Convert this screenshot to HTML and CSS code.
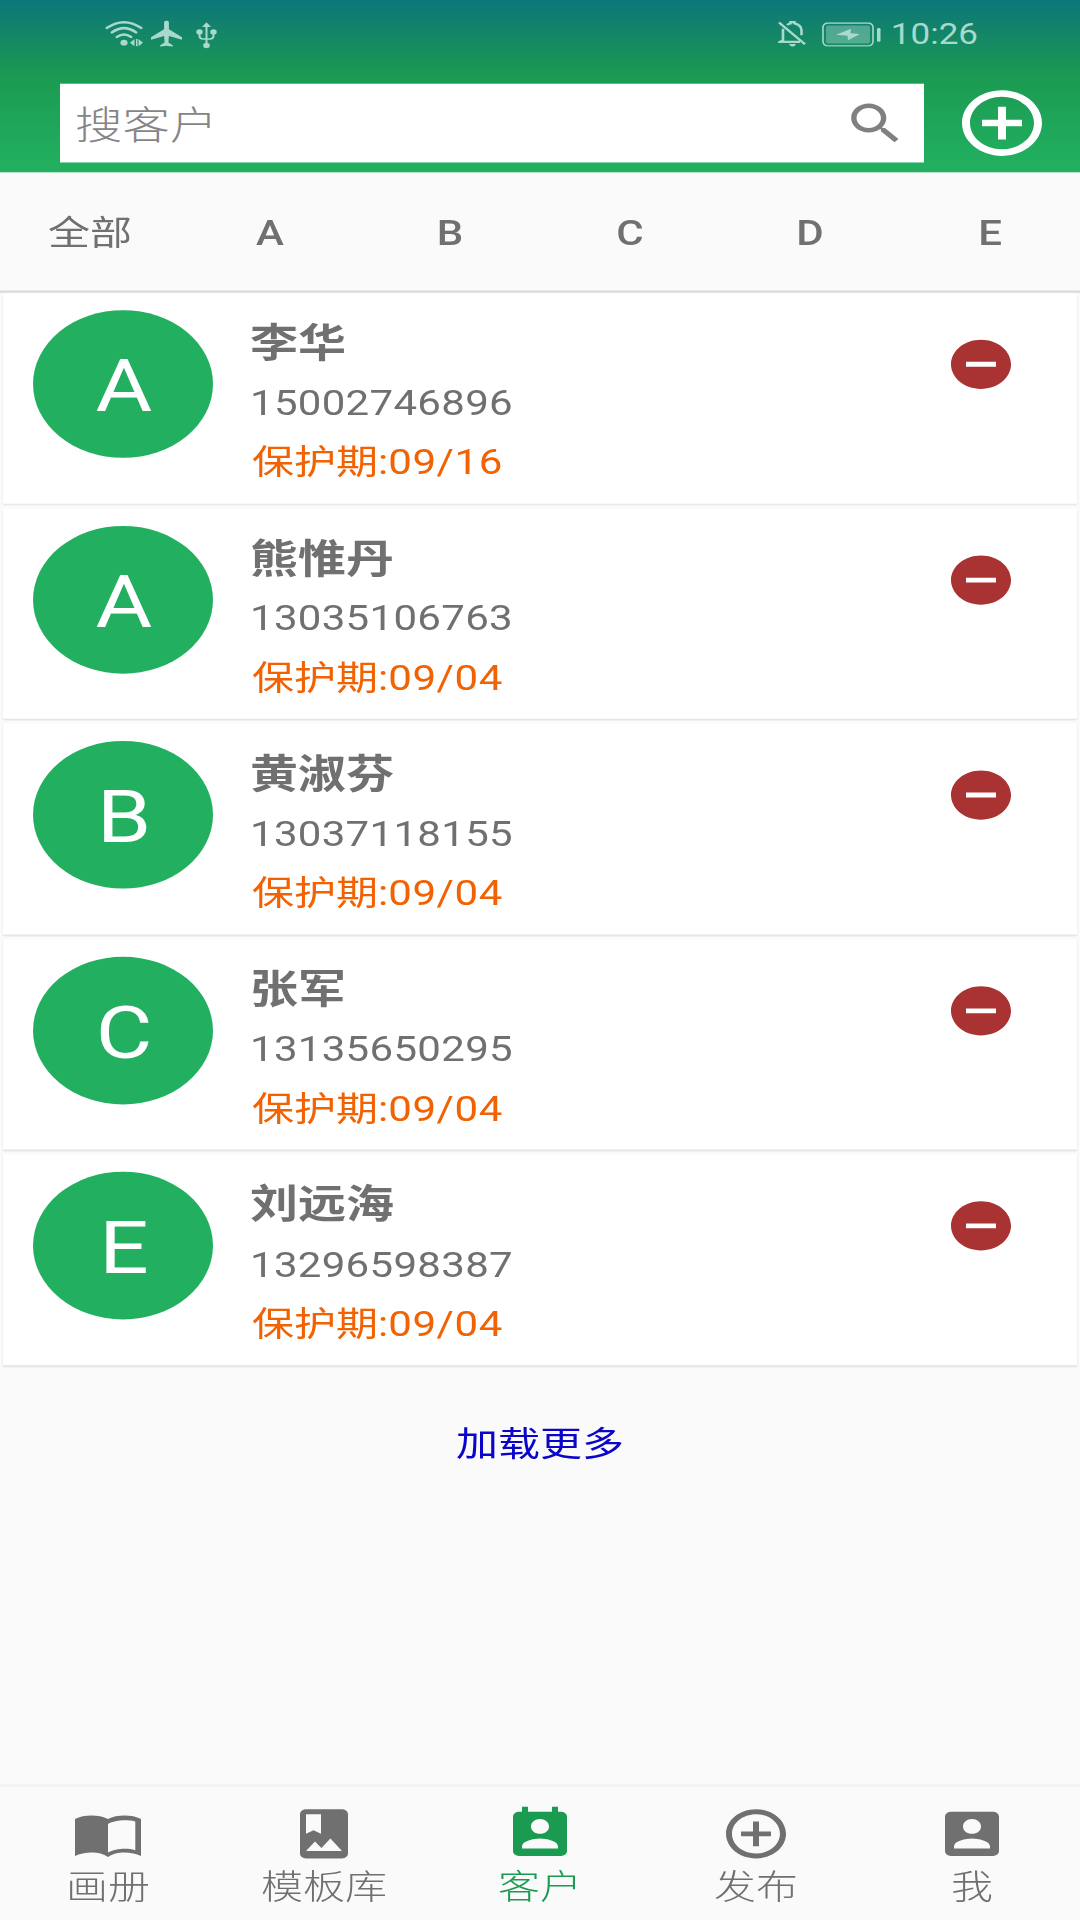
FILE: index.html
```
<!DOCTYPE html>
<html lang="zh-CN">
<head>
  <meta charset="UTF-8">
  <title>客户</title>
  <meta name="viewport" content="width=device-width, initial-scale=1.0">
  <link rel="stylesheet" href="styles.css">
</head>
<body>
  <!-- shared icons -->
  <svg class="defs">
    <symbol id="minus" viewBox="0 0 24 24"><path d="M12 2C6.48 2 2 6.48 2 12s4.48 10 10 10 10-4.48 10-10S17.52 2 12 2zm5 11H7v-2h10v2z"/></symbol>
    <symbol id="plus" viewBox="0 0 24 24"><path d="M13 7h-2v4H7v2h4v4h2v-4h4v-2h-4V7zm-1-5C6.48 2 2 6.48 2 12s4.48 10 10 10 10-4.48 10-10S17.52 2 12 2zm0 18c-4.410 0-8-3.590-8-8s3.590-8 8-8 8 3.590 8 8-3.590 8-8 8z"/></symbol>
  </svg>

  <div class="app">
    <header>
      <div class="status">
        <svg class="wifi" viewBox="0 0 38 32">
          <g fill="none" stroke="currentColor" stroke-width="3" stroke-linecap="round">
            <path d="M2 9Q19-5 36 9"/><path d="M7 14.5Q19 4 31 14.5"/><path d="M12 20Q19 14 26 20"/>
          </g>
          <circle cx="19" cy="27" r="3.600"/><path d="M25 27l4.500-4.500v9zM31 22.500h1.500v9H31zM33.500 22.500l4.500 4.500-4.500 4.500z"/>
        </svg>
        <svg class="plane" viewBox="0 0 31 32"><path d="M15.500 0c1.700 0 2.400 1.500 2.400 3v7.500L31 20.500v2.800l-13.100-4.400-.5 8 4.400 3.100v2l-6.300-1.200L9.200 32v-2l4.400-3.100-.5-8L0 23.300v-2.800l13.100-10V3c0-1.500.7-3 2.400-3z"/></svg>
        <svg class="usb" viewBox="0 0 21 32">
          <path fill="none" stroke="currentColor" stroke-width="2" d="M10.500 4v24M3.500 12v5q0 3.500 3.500 3.500h7q3.500 0 3.500-3.500v-5"/>
          <path d="M10.500 0l4.500 6H6z"/><circle cx="3.500" cy="12" r="3.200"/><circle cx="17.500" cy="12" r="3.200"/><circle cx="10.500" cy="28.500" r="3.300"/>
        </svg>
        <svg class="bell" viewBox="0 0 28 32">
          <path fill="none" stroke="currentColor" stroke-width="2.600" d="M1 2.500l26 26.500M5 10v14l-3 2h20M9 5.500Q11.500 3.500 12.500 3.500V2h4v1.500Q23.500 5.500 23.500 12v6"/>
          <path d="M11 28.500h7q-1 3.500-3.500 3.500T11 28.500z"/>
        </svg>
        <svg class="battery" viewBox="0 0 59 30">
          <rect x="1" y="1" width="50" height="28" rx="5" fill="none" stroke="currentColor" stroke-width="1.600"/>
          <rect x="4" y="4" width="44" height="22" rx="2" opacity=".42"/>
          <rect x="55" y="7" width="3.500" height="17" rx="1.500"/>
          <path d="M14 15.500L29 8l-.5 5.500 9.500 1L26 22l-.5-5.500z"/>
        </svg>
        <span class="clock">10:26</span>
      </div>
      <div class="bar">
        <div class="search">
          <span>搜客户</span>
          <svg viewBox="0 0 24 24"><path d="M15.500 14h-.79l-.28-.27C15.410 12.590 16 11.110 16 9.500 16 5.910 13.090 3 9.500 3S3 5.910 3 9.500 5.910 16 9.500 16c1.610 0 3.090-.59 4.230-1.570l.27.28v.79l5 4.990L20.490 19l-4.990-5zm-6 0C7.010 14 5 11.990 5 9.500S7.010 5 9.500 5 14 7.010 14 9.500 11.990 14 9.500 14z"/></svg>
        </div>
        <svg class="add"><use href="#plus"/></svg>
      </div>
    </header>

    <nav class="tabs">
      <span class="all">全部</span><span>A</span><span>B</span><span>C</span><span>D</span><span>E</span>
    </nav>

    <main>
      <div class="card">
        <div class="avatar">A</div>
        <div class="info">
          <div class="name">李华</div>
          <div class="phone">15002746896</div>
          <div class="date">保护期:<b>09/16</b></div>
        </div>
        <svg class="remove"><use href="#minus"/></svg>
      </div>
      <div class="card">
        <div class="avatar">A</div>
        <div class="info">
          <div class="name">熊惟丹</div>
          <div class="phone">13035106763</div>
          <div class="date">保护期:<b>09/04</b></div>
        </div>
        <svg class="remove"><use href="#minus"/></svg>
      </div>
      <div class="card">
        <div class="avatar">B</div>
        <div class="info">
          <div class="name">黄淑芬</div>
          <div class="phone">13037118155</div>
          <div class="date">保护期:<b>09/04</b></div>
        </div>
        <svg class="remove"><use href="#minus"/></svg>
      </div>
      <div class="card">
        <div class="avatar">C</div>
        <div class="info">
          <div class="name">张军</div>
          <div class="phone">13135650295</div>
          <div class="date">保护期:<b>09/04</b></div>
        </div>
        <svg class="remove"><use href="#minus"/></svg>
      </div>
      <div class="card">
        <div class="avatar">E</div>
        <div class="info">
          <div class="name">刘远海</div>
          <div class="phone">13296598387</div>
          <div class="date">保护期:<b>09/04</b></div>
        </div>
        <svg class="remove"><use href="#minus"/></svg>
      </div>
      <div class="more">加载更多</div>
    </main>

    <footer>
      <div class="item">
        <svg viewBox="0 0 24 24"><path fill-rule="evenodd" d="M1 6C2.450 4.900 4.550 4.500 6.500 4.500S10.550 4.900 12 6c1.450-1.100 3.550-1.500 5.500-1.500S21.550 4.900 23 6v15c-1.500-.9-3.500-1.400-5.500-1.400-1.950 0-4.150.6-5.500 1.800-1.350-1.200-3.550-1.800-5.500-1.800-2 0-4 .5-5.500 1.400zM12 8v11.600c1.400-.9 3.700-1.500 5.500-1.500 1.200 0 2.500.2 3.600.6V7c-1.100-.4-2.400-.5-3.600-.5-1.800 0-4.100.5-5.500 1.500z"/></svg>
        <span>画册</span>
      </div>
      <div class="item">
        <svg viewBox="0 0 24 24"><path d="M18 2H6c-1.100 0-2 .9-2 2v16c0 1.100.9 2 2 2h12c1.100 0 2-.9 2-2V4c0-1.100-.9-2-2-2zM6 4h5v8l-2.500-1.500L6 12V4zm0 15l3-3.860 2.140 2.580 3-3.860L18 19H6z"/></svg>
        <span>模板库</span>
      </div>
      <div class="item active">
        <svg viewBox="0 0 24 24"><path d="M19 3h-1V1h-2v2H8V1H6v2H5c-1.110 0-2 .9-2 2v14c0 1.100.89 2 2 2h14c1.100 0 2-.9 2-2V5c0-1.100-.9-2-2-2zm-7 3c1.660 0 3 1.340 3 3s-1.340 3-3 3-3-1.340-3-3 1.340-3 3-3zm6 12H6v-1c0-2 4-3.100 6-3.100s6 1.100 6 3.100v1z"/></svg>
        <span>客户</span>
      </div>
      <div class="item">
        <svg><use href="#plus"/></svg>
        <span>发布</span>
      </div>
      <div class="item">
        <svg viewBox="0 0 24 24"><path d="M3 5v14c0 1.100.89 2 2 2h14c1.100 0 2-.9 2-2V5c0-1.100-.9-2-2-2H5c-1.110 0-2 .9-2 2zm12 4c0 1.660-1.340 3-3 3s-3-1.340-3-3 1.340-3 3-3 3 1.340 3 3zm-9 8c0-2 4-3.100 6-3.100s6 1.100 6 3.100v1H6v-1z"/></svg>
        <span>我</span>
      </div>
    </footer>
  </div>
</body>
</html>
```
FILE: styles.css
```
* {
  box-sizing: border-box;
}
html {
  height: 1920px;
  overflow: hidden;
}
body {
  margin: 0;
  height: 1920px;
  overflow: hidden;
  background: #fafafa;
  font-family: Roboto, "Noto Sans CJK SC", sans-serif;
  font-size: 42px;
  color: #707070;
}
svg {
  fill: currentColor;
  flex: none;
}
.defs {
  display: none;
}
/* 1080x2340 phone layout squeezed into 1080x1920 */
.app {
  width: 1080px;
  height: 2340px;
  margin-bottom: -420px;
  display: flex;
  flex-direction: column;
  transform: scaleY(0.82051);
  transform-origin: 0 0;
}
header {
  height: 210px;
  background: linear-gradient(#0d7679 0, #1b9a52 92px, #22b060 205px);
}
.status {
  height: 84px;
  padding: 25px 102px 0 105px;
  display: flex;
  align-items: flex-start;
  color: #a9d9cb;
}
.wifi {
  width: 38px;
  height: 32px;
}
.plane {
  width: 31px;
  height: 32px;
  margin-left: 8px;
}
.usb {
  width: 21px;
  height: 32px;
  margin: 2px auto 0 14px;
}
.bell {
  width: 28px;
  height: 32px;
}
.battery {
  width: 59px;
  height: 30px;
  margin: 2px 0 0 16px;
}
.clock {
  font-size: 35px;
  line-height: 32px;
  margin: 2px 0 0 10px;
}
.bar {
  display: flex;
  padding: 18px 30px 0 60px;
}
.search {
  width: 864px;
  height: 96px;
  padding: 0 16px 0 15px;
  background: #fff;
  display: flex;
  align-items: center;
  justify-content: space-between;
  font-size: 47.500px;
  font-weight: 300;
  color: #858585;
}
.search span {
  padding-bottom: 4px;
}
.search svg {
  width: 65px;
  height: 65px;
  color: #808080;
}
.add {
  width: 96px;
  height: 96px;
  margin-left: 30px;
  color: #fff;
}
.tabs {
  height: 147px;
  display: flex;
  border-bottom: 3px solid #dcdcdc;
}
.tabs span {
  width: 180px;
  line-height: 147px;
  text-align: center;
  font-weight: 500;
}
.tabs .all {
  font-weight: 400;
}
main {
  flex: 1;
}
.card {
  height: 256.600px;
  margin: 0 3px 6px;
  padding: 21px 60px 0 30px;
  display: flex;
  background: #fff;
  box-shadow: 0 2px 2px #ddd;
}
.avatar {
  width: 180px;
  height: 180px;
  border-radius: 50%;
  background: #22b060;
  color: #fff;
  font-size: 87px;
  line-height: 186px;
  text-align: center;
  text-indent: 2px;
}
.info {
  margin-left: 37px;
  padding-top: 5px;
  line-height: 72.500px;
}
.name {
  font-size: 48px;
  font-weight: 700;
}
.phone {
  letter-spacing: 0.300px;
}
.date {
  padding-left: 2px;
  color: #f26202;
}
.date b {
  font-weight: 400;
  letter-spacing: 0.600px;
}
.remove {
  width: 72px;
  height: 72px;
  margin: 30px 0 0 auto;
  color: #a93232;
}
.more {
  margin-top: 61px;
  text-align: center;
  color: #0a05c8;
}
footer {
  height: 162px;
  display: flex;
  background: #fafafa;
  box-shadow: 0 -4px 0 #f4f4f4;
}
.item {
  width: 216px;
  padding-top: 21px;
  display: flex;
  flex-direction: column;
  align-items: center;
  font-weight: 300;
}
.item svg {
  width: 72px;
  height: 72px;
}
.item span {
  line-height: 57px;
}
.active {
  color: #1b9a52;
}
```
